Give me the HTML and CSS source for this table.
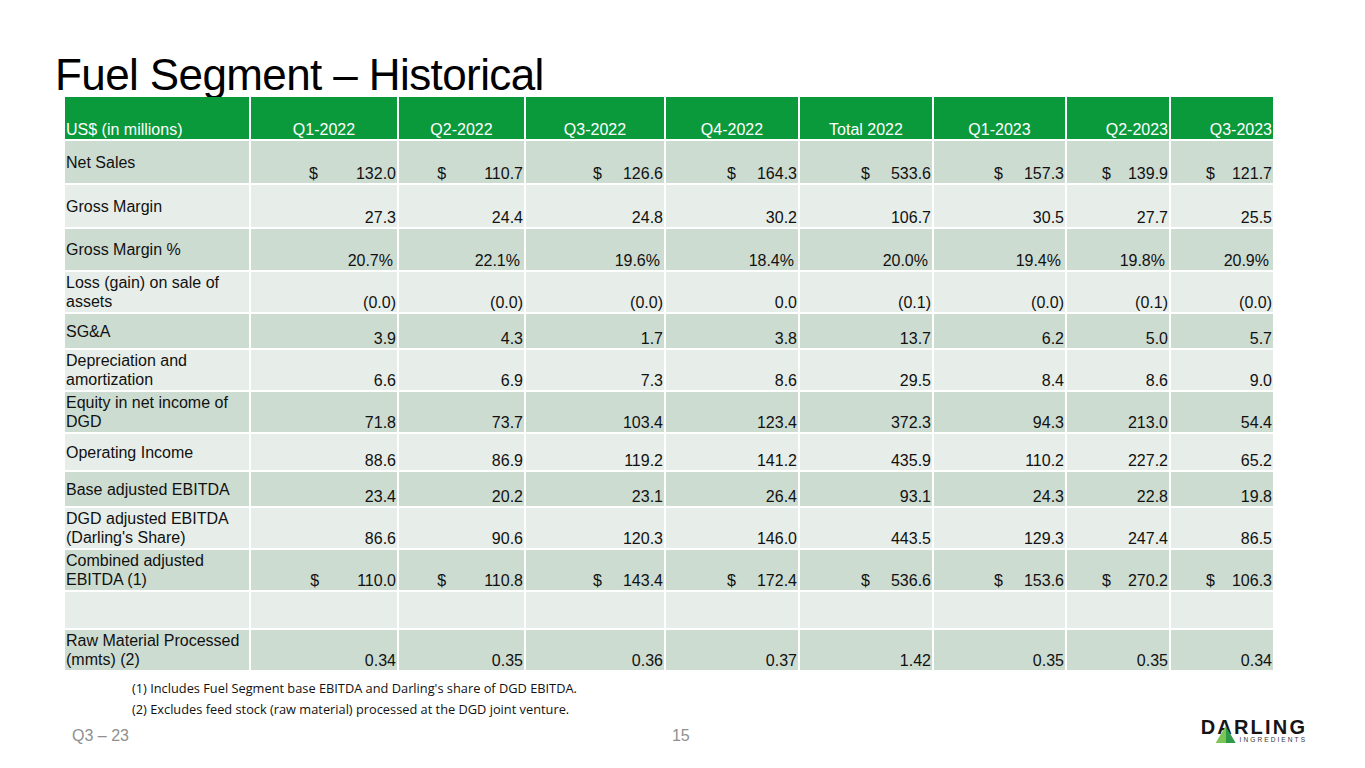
FILE: index.html
```html
<!DOCTYPE html>
<html lang="en">
<head>
<meta charset="utf-8">
<title>Fuel Segment – Historical</title>
<link rel="stylesheet" href="styles.css">
</head>
<body>
<div class="slide">
  <h1 class="title">Fuel Segment – Historical</h1>

  <div class="table">
    <!-- header -->
    <div class="c h left">US$ (in millions)</div>
    <div class="c h">Q1-2022</div>
    <div class="c h">Q2-2022</div>
    <div class="c h">Q3-2022</div>
    <div class="c h">Q4-2022</div>
    <div class="c h">Total 2022</div>
    <div class="c h">Q1-2023</div>
    <div class="c h right">Q2-2023</div>
    <div class="c h right">Q3-2023</div>

    <!-- Net Sales -->
    <div class="c d lbl">Net Sales</div>
    <div class="c d num"><span class="cur wide">$</span>132.0</div>
    <div class="c d num"><span class="cur wide">$</span>110.7</div>
    <div class="c d num"><span class="cur mid">$</span>126.6</div>
    <div class="c d num"><span class="cur mid">$</span>164.3</div>
    <div class="c d num"><span class="cur mid">$</span>533.6</div>
    <div class="c d num"><span class="cur mid">$</span>157.3</div>
    <div class="c d num"><span class="cur tight">$</span>139.9</div>
    <div class="c d num"><span class="cur tight">$</span>121.7</div>

    <!-- Gross Margin -->
    <div class="c l lbl">Gross Margin</div>
    <div class="c l num">27.3</div>
    <div class="c l num">24.4</div>
    <div class="c l num">24.8</div>
    <div class="c l num">30.2</div>
    <div class="c l num">106.7</div>
    <div class="c l num">30.5</div>
    <div class="c l num">27.7</div>
    <div class="c l num">25.5</div>

    <!-- Gross Margin % -->
    <div class="c d lbl">Gross Margin %</div>
    <div class="c d num pct">20.7%</div>
    <div class="c d num pct">22.1%</div>
    <div class="c d num pct">19.6%</div>
    <div class="c d num pct">18.4%</div>
    <div class="c d num pct">20.0%</div>
    <div class="c d num pct">19.4%</div>
    <div class="c d num pct">19.8%</div>
    <div class="c d num pct">20.9%</div>

    <!-- Loss (gain) -->
    <div class="c l lbl">Loss (gain) on sale of assets</div>
    <div class="c l num">(0.0)</div>
    <div class="c l num">(0.0)</div>
    <div class="c l num">(0.0)</div>
    <div class="c l num">0.0</div>
    <div class="c l num">(0.1)</div>
    <div class="c l num">(0.0)</div>
    <div class="c l num">(0.1)</div>
    <div class="c l num">(0.0)</div>

    <!-- SG&A -->
    <div class="c d lbl">SG&amp;A</div>
    <div class="c d num">3.9</div>
    <div class="c d num">4.3</div>
    <div class="c d num">1.7</div>
    <div class="c d num">3.8</div>
    <div class="c d num">13.7</div>
    <div class="c d num">6.2</div>
    <div class="c d num">5.0</div>
    <div class="c d num">5.7</div>

    <!-- Depreciation -->
    <div class="c l lbl">Depreciation and amortization</div>
    <div class="c l num">6.6</div>
    <div class="c l num">6.9</div>
    <div class="c l num">7.3</div>
    <div class="c l num">8.6</div>
    <div class="c l num">29.5</div>
    <div class="c l num">8.4</div>
    <div class="c l num">8.6</div>
    <div class="c l num">9.0</div>

    <!-- Equity -->
    <div class="c d lbl">Equity in net income of DGD</div>
    <div class="c d num">71.8</div>
    <div class="c d num">73.7</div>
    <div class="c d num">103.4</div>
    <div class="c d num">123.4</div>
    <div class="c d num">372.3</div>
    <div class="c d num">94.3</div>
    <div class="c d num">213.0</div>
    <div class="c d num">54.4</div>

    <!-- Operating Income -->
    <div class="c l lbl">Operating Income</div>
    <div class="c l num">88.6</div>
    <div class="c l num">86.9</div>
    <div class="c l num">119.2</div>
    <div class="c l num">141.2</div>
    <div class="c l num">435.9</div>
    <div class="c l num">110.2</div>
    <div class="c l num">227.2</div>
    <div class="c l num">65.2</div>

    <!-- Base adjusted EBITDA -->
    <div class="c d lbl">Base adjusted EBITDA</div>
    <div class="c d num">23.4</div>
    <div class="c d num">20.2</div>
    <div class="c d num">23.1</div>
    <div class="c d num">26.4</div>
    <div class="c d num">93.1</div>
    <div class="c d num">24.3</div>
    <div class="c d num">22.8</div>
    <div class="c d num">19.8</div>

    <!-- DGD adjusted EBITDA -->
    <div class="c l lbl">DGD adjusted EBITDA (Darling's Share)</div>
    <div class="c l num">86.6</div>
    <div class="c l num">90.6</div>
    <div class="c l num">120.3</div>
    <div class="c l num">146.0</div>
    <div class="c l num">443.5</div>
    <div class="c l num">129.3</div>
    <div class="c l num">247.4</div>
    <div class="c l num">86.5</div>

    <!-- Combined adjusted EBITDA -->
    <div class="c d lbl">Combined adjusted EBITDA (1)</div>
    <div class="c d num"><span class="cur wide">$</span>110.0</div>
    <div class="c d num"><span class="cur wide">$</span>110.8</div>
    <div class="c d num"><span class="cur mid">$</span>143.4</div>
    <div class="c d num"><span class="cur mid">$</span>172.4</div>
    <div class="c d num"><span class="cur mid">$</span>536.6</div>
    <div class="c d num"><span class="cur mid">$</span>153.6</div>
    <div class="c d num"><span class="cur tight">$</span>270.2</div>
    <div class="c d num"><span class="cur tight">$</span>106.3</div>

    <!-- blank -->
    <div class="c l"></div>
    <div class="c l"></div>
    <div class="c l"></div>
    <div class="c l"></div>
    <div class="c l"></div>
    <div class="c l"></div>
    <div class="c l"></div>
    <div class="c l"></div>
    <div class="c l"></div>

    <!-- Raw Material -->
    <div class="c d lbl">Raw Material Processed (mmts) (2)</div>
    <div class="c d num">0.34</div>
    <div class="c d num">0.35</div>
    <div class="c d num">0.36</div>
    <div class="c d num">0.37</div>
    <div class="c d num">1.42</div>
    <div class="c d num">0.35</div>
    <div class="c d num">0.35</div>
    <div class="c d num">0.34</div>
  </div>

  <div class="notes">
    <p>(1) Includes Fuel Segment base EBITDA and Darling's share of DGD EBITDA.</p>
    <p>(2) Excludes feed stock (raw material) processed at the DGD joint venture.</p>
  </div>

  <div class="footer">
    <span class="period">Q3 – 23</span>
    <span class="page">15</span>
    <div class="logo">
      <span class="brand">DARLING<span class="tri"></span></span>
      <span class="sub">INGREDIENTS</span>
    </div>
  </div>
</div>
</body>
</html>
```
FILE: styles.css
```css
* { box-sizing: border-box; }

html, body {
  margin: 0;
  padding: 0;
  background: #ffffff;
}

.slide {
  width: 1365px;
  height: 768px;
  overflow: hidden;
  display: flex;
  flex-direction: column;
  font-family: "Liberation Sans", Arial, sans-serif;
  color: #111111;
}

.title {
  margin: 0;
  padding: 53px 0 0 55px;
  font-size: 44px;
  line-height: 44px;
  font-weight: normal;
  letter-spacing: -0.6px;
  color: #000000;
}

.table {
  margin-left: 65px;
  display: grid;
  grid-template-columns: 184px 146px 125px 138px 132px 132px 131px 102px 102px;
  grid-template-rows: 42px 42px 42px 41px 40px 34px 40px 40px 36px 34px 40px 40px 36px 40px;
  gap: 2px;
  background: #ffffff;
  width: 1208px;
}

.c {
  display: flex;
  font-size: 16px;
  line-height: 16px;
  padding: 0 1px 1px 1px;
  white-space: nowrap;
}

.h {
  background: #0a9a3c;
  color: #ffffff;
  align-items: flex-end;
  justify-content: center;
}
.h.left { justify-content: flex-start; }
.h.right { justify-content: flex-end; }

.d { background: #cddcd1; }
.l { background: #e7eee9; }

.lbl {
  align-items: center;
  white-space: normal;
  line-height: 19px;
  padding: 0 8px 0 1px;
}

.num {
  align-items: flex-end;
  justify-content: flex-end;
}

.pct { padding-right: 4px; }

.cur.wide { margin-right: 38px; }
.cur.mid { margin-right: 21px; }
.cur.tight { margin-right: 17px; }

.notes {
  margin: 8px 0 0 132px;
  font-family: "Open Sans", "Liberation Sans", sans-serif;
  font-size: 12.8px;
  line-height: 21px;
  color: #111111;
}
.notes p { margin: 0; }

.footer {
  display: flex;
  align-items: center;
  height: 38px;
  margin-top: -3px;
  padding-left: 72px;
  padding-right: 60px;
  color: #8f8f8f;
  font-size: 16px;
}

.page { margin-left: 543px; }

.logo {
  margin-left: auto;
  display: flex;
  flex-direction: column;
  align-items: flex-end;
  align-self: flex-start;
  margin-top: 0;
}

.brand {
  position: relative;
  font-weight: bold;
  font-size: 20px;
  line-height: 20px;
  letter-spacing: 2.2px;
  color: #151515;
  margin-right: -2.2px;
}

.tri {
  position: absolute;
  left: 15px;
  top: 9px;
  width: 20px;
  height: 17px;
  clip-path: polygon(50% 0, 100% 100%, 0 100%);
  background: linear-gradient(90deg, #7cc554 0%, #7cc554 50%, #2f9a48 50%, #2f9a48 100%);
}

.sub {
  font-size: 6.5px;
  line-height: 8px;
  letter-spacing: 2.1px;
  margin-right: -2.1px;
  margin-top: -1px;
  color: #333333;
}
```
